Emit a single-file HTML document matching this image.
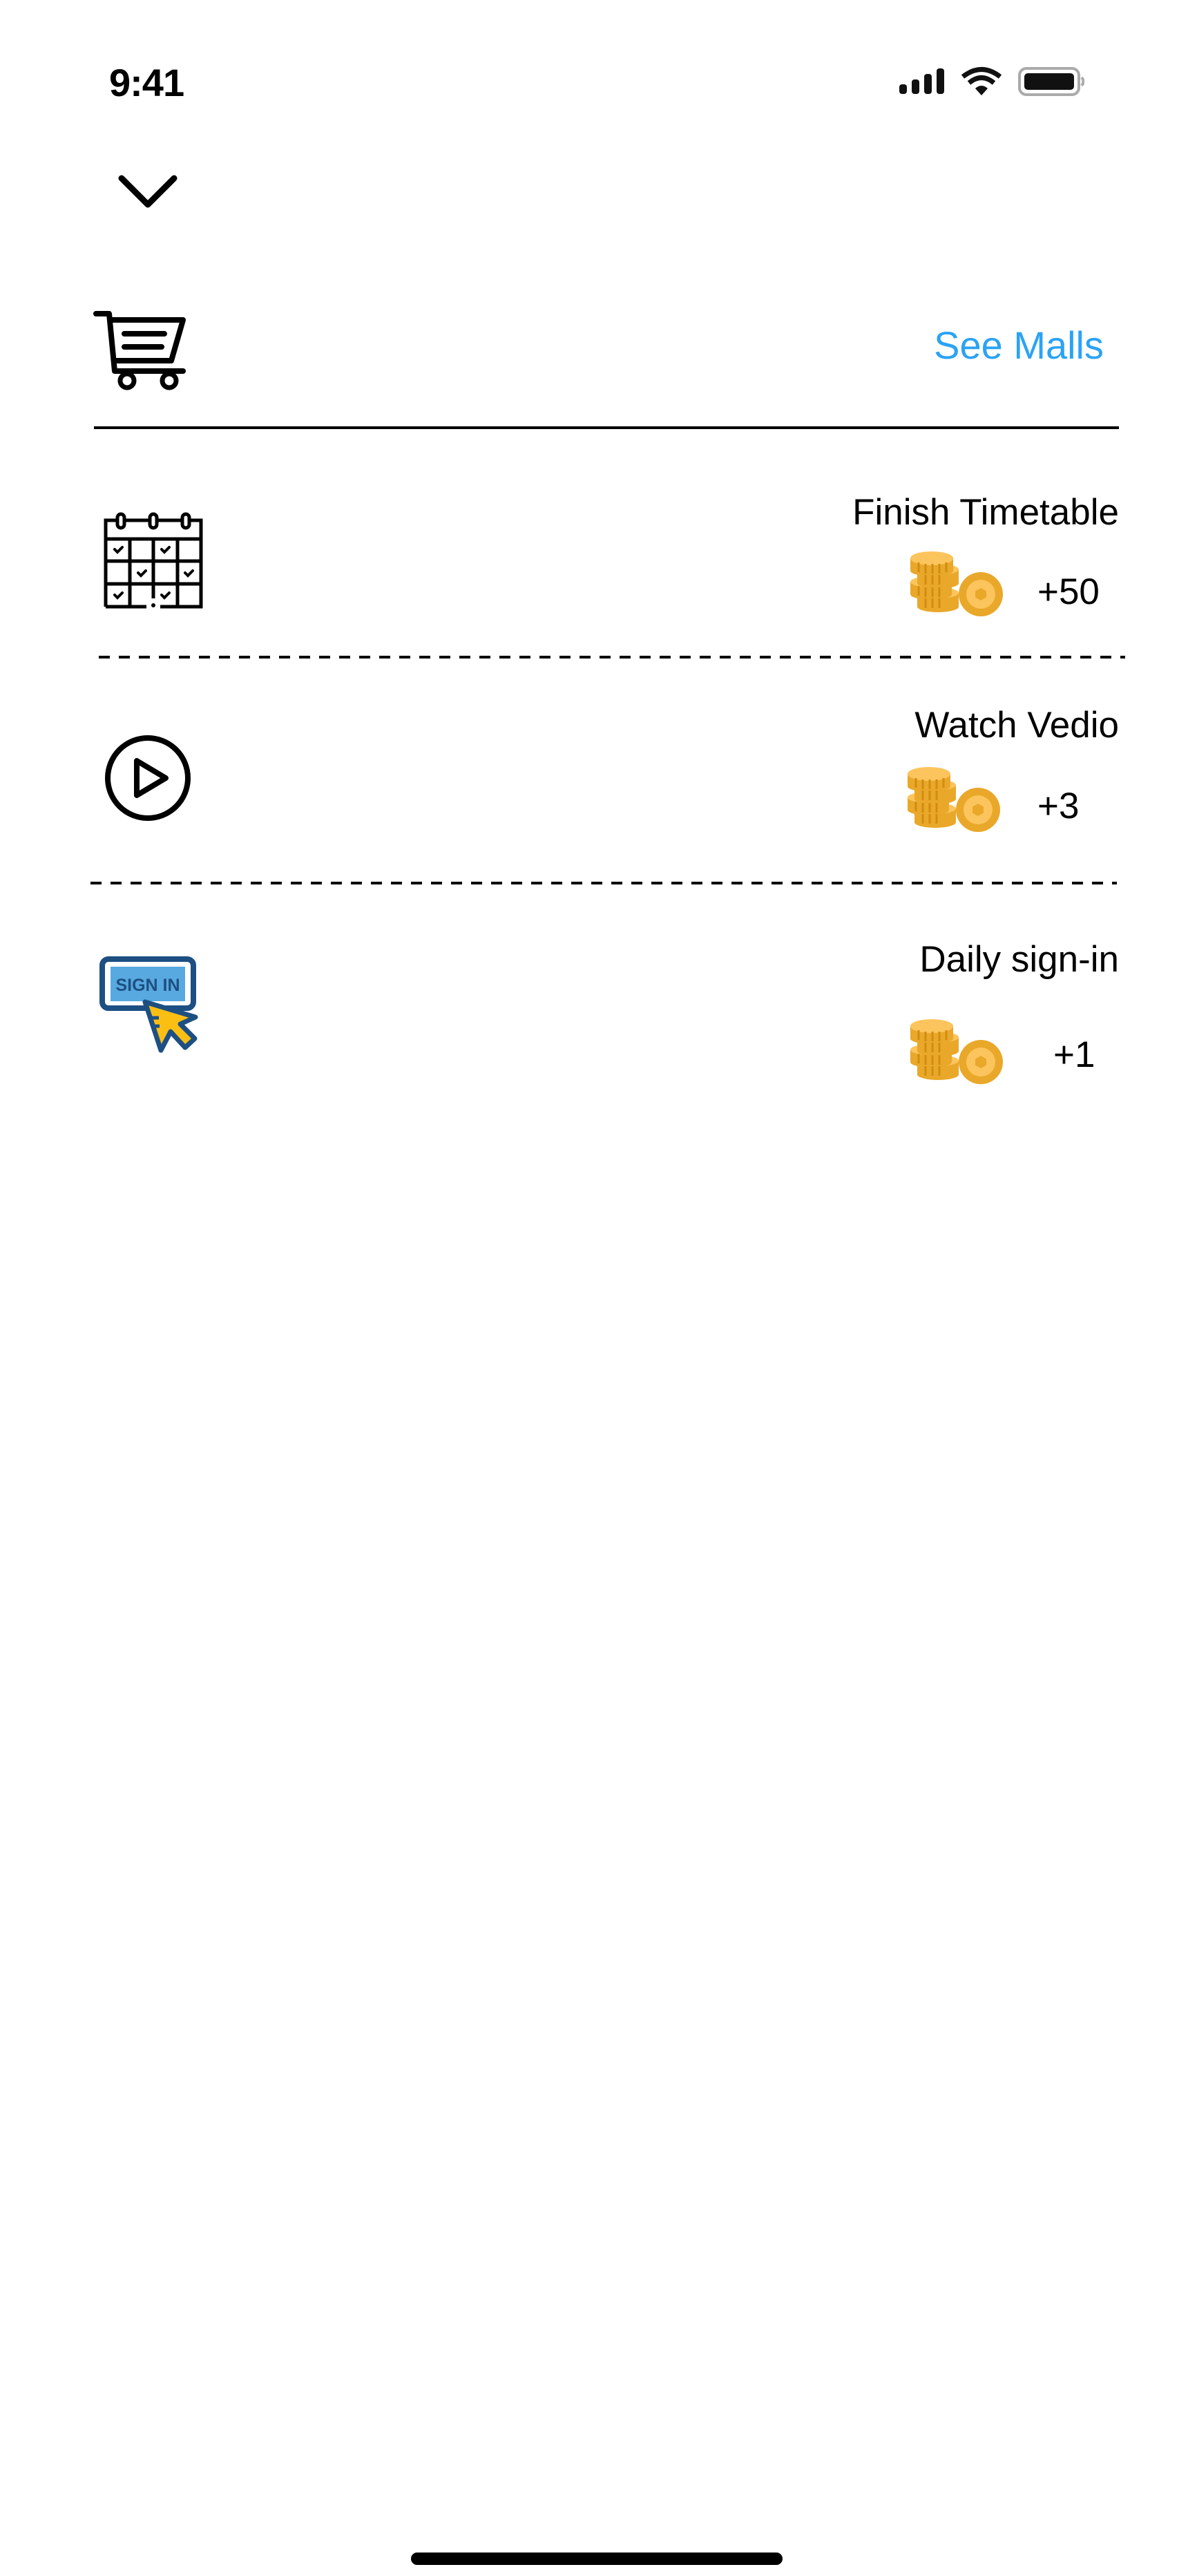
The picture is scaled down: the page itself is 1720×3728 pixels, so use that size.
<!DOCTYPE html>
<html><head><meta charset="utf-8"><style>
html,body{margin:0;padding:0;background:#fff;}
body{width:1720px;height:3728px;position:relative;overflow:hidden;font-family:"Liberation Sans",sans-serif;color:#000;}
.t{position:absolute;white-space:nowrap;line-height:1;}
svg{position:absolute;}
</style></head><body>
<div class="t" style="left:158px;top:92px;font-size:56px;font-weight:bold;letter-spacing:-1px">9:41</div>
<svg style="left:1300px;top:96px" width="270" height="46" viewBox="0 0 270 46">
 <rect x="2" y="26" width="11" height="14" rx="4" fill="#111"/>
 <rect x="20" y="19" width="11" height="21" rx="4" fill="#111"/>
 <rect x="38" y="11" width="11" height="29" rx="4" fill="#111"/>
 <rect x="56" y="3" width="11" height="37" rx="4" fill="#111"/>
 <path d="M94 15 Q121 -6 148 15" stroke="#111" stroke-width="7" fill="none"/>
 <path d="M103 24 Q121 9 139 24" stroke="#111" stroke-width="7" fill="none"/>
 <path d="M112 32 L121 42 L130 32 Q121 24 112 32Z" fill="#111"/>
 <rect x="176" y="3" width="86" height="38" rx="10" fill="none" stroke="#aaa" stroke-width="4"/>
 <rect x="183" y="10" width="72" height="24" rx="5" fill="#111"/>
 <path d="M266 16 Q271 22 266 28" stroke="#aaa" stroke-width="4" fill="none"/>
</svg>
<svg style="left:170px;top:250px" width="90" height="56" viewBox="0 0 90 56"><path d="M6 8 L44 46 L82 8" stroke="#000" stroke-width="9" fill="none" stroke-linecap="round" stroke-linejoin="round"/></svg>
<svg style="left:130px;top:440px" width="150" height="130" viewBox="130 440 150 130">
 <path d="M139 454 H158 L166 537 H265" stroke="#000" stroke-width="8" fill="none" stroke-linecap="round" stroke-linejoin="round"/>
 <path d="M162 463 H265 L248 522 H166" stroke="#000" stroke-width="8" fill="none" stroke-linejoin="round"/>
 <path d="M180 483 H238 M180 502 H234" stroke="#000" stroke-width="8" stroke-linecap="round"/>
 <circle cx="184" cy="551" r="10" stroke="#000" stroke-width="7" fill="#fff"/>
 <circle cx="245" cy="551" r="10" stroke="#000" stroke-width="7" fill="#fff"/>
</svg>
<div class="t" style="right:122px;top:472px;font-size:56px;color:#2aa3f5">See Malls</div>
<div style="position:absolute;left:136px;top:617px;width:1484px;height:4px;background:#000"></div>

<svg style="left:145px;top:740px" width="155" height="145" viewBox="145 740 155 145">
 <g stroke="#000" stroke-width="5" fill="none">
 <path d="M153 878 V753 H291 V878 H232 M212 878 H153"/>
 <path d="M153 780 H291 M153 812 H291 M153 845 H291 M188 780 V878 M222 780 V866 M257 780 V878"/>
 </g>
 <g fill="#fff" stroke="#000" stroke-width="5"><rect x="170" y="744" width="10" height="20" rx="5"/><rect x="217" y="744" width="10" height="20" rx="5"/><rect x="264" y="744" width="10" height="20" rx="5"/></g>
 <circle cx="222" cy="876" r="3" fill="#000"/>
 <g stroke="#000" stroke-width="4" fill="none" stroke-linecap="round"><path d="M166 795 l4 4 l7 -7 M234 795 l4 4 l7 -7 M200 829 l4 4 l7 -7 M268 829 l4 4 l7 -7 M166 861 l4 4 l7 -7 M234 861 l4 4 l7 -7"/></g>
</svg>

<svg width="0" height="0"><defs>
<g id="coins">
 <g>
  <rect x="28" y="68" width="60" height="20" fill="#e9a82a"/><ellipse cx="58" cy="88" rx="30" ry="8" fill="#e9a82a"/><ellipse cx="58" cy="68" rx="30" ry="8" fill="#fcc45c"/>
  <rect x="18" y="52" width="60" height="18" fill="#e9a82a"/><ellipse cx="48" cy="70" rx="30" ry="8" fill="#e9a82a"/><ellipse cx="48" cy="52" rx="30" ry="8" fill="#fcc45c"/>
  <rect x="28" y="34" width="60" height="20" fill="#e9a82a"/><ellipse cx="58" cy="54" rx="30" ry="8" fill="#e9a82a"/><ellipse cx="58" cy="34" rx="30" ry="8" fill="#fcc45c"/>
  <rect x="18" y="18" width="62" height="18" fill="#e9a82a"/><ellipse cx="49" cy="36" rx="31" ry="8" fill="#e9a82a"/><ellipse cx="49" cy="18" rx="31" ry="10" fill="#fcc45c"/>
  <g stroke="#d18d10" stroke-width="3"><path d="M30 24v14M40 26v14M50 26v14M60 26v14M70 24v14M40 42v14M50 42v14M60 42v14M30 58v14M40 60v14M50 60v14M60 60v14M40 76v14M50 76v14M60 76v14"/></g>
 </g>
 <circle cx="120" cy="70" r="32" fill="#e9a82a"/><circle cx="120" cy="70" r="21" fill="#fcc45c"/>
 <path d="M120 61 L128 65.5 V74.5 L120 79 L112 74.5 V65.5Z" fill="#e9a82a"/>
</g></defs></svg>

<div class="t" style="right:100px;top:715px;font-size:53px">Finish Timetable</div>
<svg style="left:1300px;top:790px" width="160" height="110" viewBox="0 0 160 110"><use href="#coins"/></svg>
<div class="t" style="left:1502px;top:830px;font-size:53px">+50</div>
<svg style="left:143px;top:948px" width="1486" height="6"><line x1="0" y1="3" x2="1486" y2="3" stroke="#000" stroke-width="4" stroke-dasharray="16 13"/></svg>

<svg style="left:148px;top:1060px" width="132" height="132" viewBox="0 0 132 132">
 <circle cx="66" cy="66" r="58" stroke="#000" stroke-width="8" fill="none"/>
 <path d="M50 41 L92 66 L50 91Z" stroke="#000" stroke-width="8" fill="none" stroke-linejoin="round"/>
</svg>
<div class="t" style="right:100px;top:1023px;font-size:53px">Watch Vedio</div>
<svg style="left:1296px;top:1102px" width="160" height="110" viewBox="0 0 160 110"><use href="#coins"/></svg>
<div class="t" style="left:1502px;top:1140px;font-size:53px">+3</div>
<svg style="left:131px;top:1275px" width="1486" height="6"><line x1="0" y1="3" x2="1486" y2="3" stroke="#000" stroke-width="4" stroke-dasharray="16 13"/></svg>

<svg style="left:130px;top:1380px" width="170" height="160" viewBox="130 1380 170 160">
 <rect x="148" y="1388" width="132" height="71" rx="9" fill="#fff" stroke="#1d4f82" stroke-width="8"/>
 <rect x="160" y="1399" width="108" height="50" fill="#57a9e0"/>
 <text x="214" y="1434" text-anchor="middle" font-family="Liberation Sans,sans-serif" font-weight="bold" font-size="25" fill="#1d4f82">SIGN IN</text>
 <path d="M210 1450 L233 1520 L247 1493 L268 1516 L282 1503 L261 1482 L283 1472Z" fill="#fbbf13" stroke="#1d4f82" stroke-width="7" stroke-linejoin="round"/>
 <path d="M218 1473 h12 M221 1485 h10" stroke="#1d4f82" stroke-width="5"/>
</svg>
<div class="t" style="right:100px;top:1362px;font-size:53px">Daily sign-in</div>
<svg style="left:1300px;top:1467px" width="160" height="110" viewBox="0 0 160 110"><use href="#coins"/></svg>
<div class="t" style="left:1525px;top:1500px;font-size:53px">+1</div>

<div style="position:absolute;left:595px;top:3694px;width:538px;height:18px;border-radius:9px;background:#000"></div>
</body></html>
